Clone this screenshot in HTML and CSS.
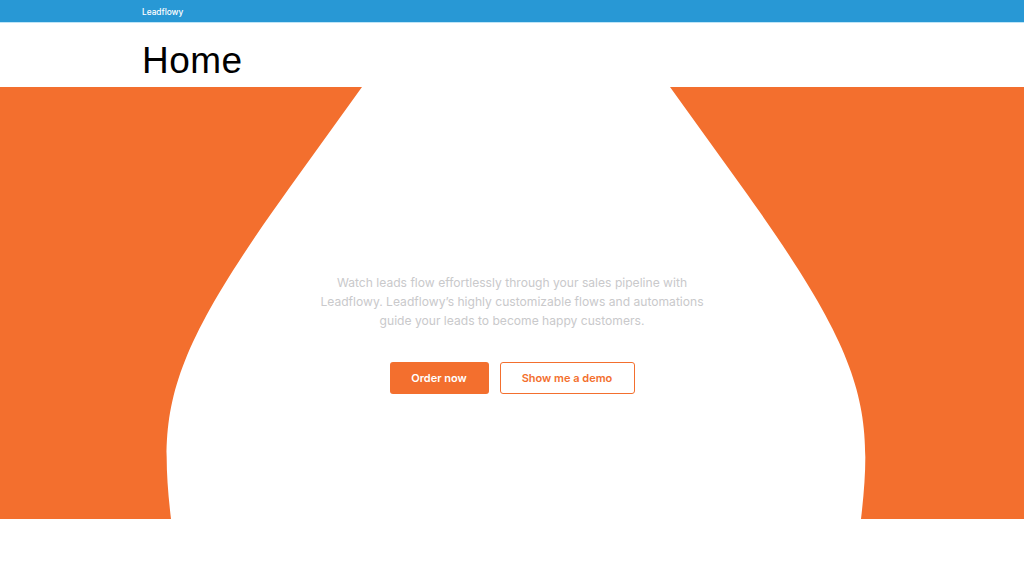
FILE: index.html
```html
<!DOCTYPE html>
<html lang="en">
<head>
<meta charset="utf-8">
<title>Leadflowy – Home</title>
<link rel="stylesheet" href="styles.css">
</head>
<body>
  <nav class="topbar">
    <div class="container">
      <span class="brand">Leadflowy</span>
    </div>
  </nav>

  <header class="page-head">
    <div class="container">
      <h1 class="page-title">Home</h1>
    </div>
  </header>

  <section class="hero">
    <svg class="hero-bg" viewBox="0 0 1024 432" preserveAspectRatio="none" aria-hidden="true">
      <path d="M0,0 L362,0 L290,100 C168,270 158,320 171,432 L0,432 Z" fill="#f36f2e"/>
      <path d="M1024,0 L670,0 L742,100 C864,270 874,320 861,432 L1024,432 Z" fill="#f36f2e"/>
    </svg>
    <div class="hero-content">
      <p class="hero-text">Watch leads flow effortlessly through your sales pipeline with Leadflowy. Leadflowy’s highly customizable flows and automations guide your leads to become happy customers.</p>
      <div class="hero-actions">
        <a class="btn btn-primary" href="#">Order now</a>
        <a class="btn btn-outline" href="#">Show me a demo</a>
      </div>
    </div>
  </section>
</body>
</html>
```

FILE: styles.css
```css
* {
  box-sizing: border-box;
}

html,
body {
  margin: 0;
  padding: 0;
  background: #ffffff;
}

body {
  font-family: Inter, "Liberation Sans", Arial, sans-serif;
  color: #111;
}

.container {
  width: 740px;
  margin: 0 auto;
}

/* Top navigation bar */
.topbar {
  height: 23px;
  background: #2898d5;
  border-bottom: 1px solid #bfe5f7;
}

.topbar .container {
  height: 100%;
  display: flex;
  align-items: center;
  padding-top: 1px;
}

.brand {
  color: #ffffff;
  font-size: 8.3px;
  font-weight: 500;
}

/* Page heading */
.page-head {
  height: 64px;
}

.page-title {
  margin: 0;
  padding-top: 17px;
  font-family: "Liberation Sans", Arial, sans-serif;
  font-size: 37px;
  font-weight: 400;
  letter-spacing: 0.5px;
  line-height: 42px;
  color: #000;
}

/* Hero with the flowing orange sides */
.hero {
  position: relative;
  height: 432px;
  overflow: hidden;
}

.hero-bg {
  position: absolute;
  inset: 0;
  width: 100%;
  height: 100%;
  display: block;
}

.hero-content {
  position: relative;
  display: flex;
  flex-direction: column;
  align-items: center;
  padding-top: 186px;
}

.hero-text {
  margin: 0;
  width: 400px;
  text-align: center;
  font-size: 12.1px;
  line-height: 19px;
  color: #c9c9cb;
}

.hero-actions {
  display: flex;
  gap: 11px;
  margin-top: 32px;
}

.btn {
  display: flex;
  align-items: center;
  justify-content: center;
  height: 32px;
  border-radius: 3px;
  font-size: 11px;
  font-weight: 600;
  text-decoration: none;
}

.btn-primary {
  width: 99px;
  background: #f36f2e;
  color: #ffffff;
}

.btn-outline {
  width: 135px;
  border: 1.5px solid #f36f2e;
  color: #f36f2e;
  background: #ffffff;
}
```
